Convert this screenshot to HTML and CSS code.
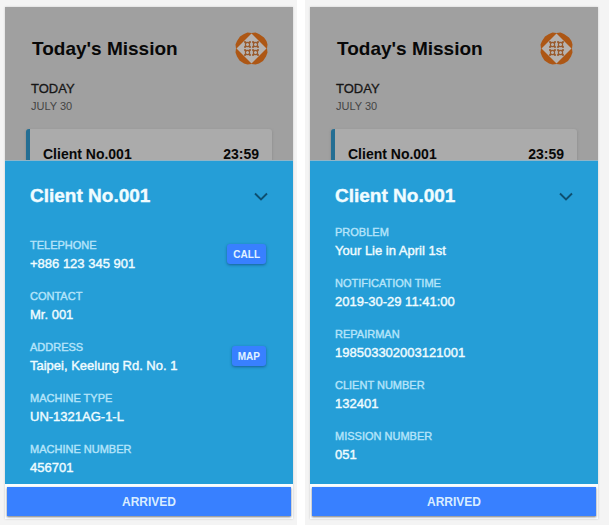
FILE: index.html
```html
<!DOCTYPE html>
<html lang="en">
<head>
<meta charset="utf-8">
<title>Today's Mission</title>
<link rel="stylesheet" href="styles.css">
</head>
<body>
<svg class="defs" aria-hidden="true">
  <defs>
    <g id="cell" fill="none" stroke="#9a5a2c">
      <path d="M.5.500 2.200 2.200M6.500.500 4.800 2.200M.5 6.500 2.200 4.800M6.500 6.500 4.800 4.800" stroke-width="1.300"/>
      <circle cx="3.500" cy="3.500" r="2.100" stroke-width="1.100"/>
      <path d="M.5.600H2.200M4.800.600H6.500M.5 6.400H2.200M4.800 6.400H6.500M.6.500V2.200M.6 4.800V6.500M6.400.500V2.200M6.400 4.800V6.500" stroke-width=".7"/>
    </g>
    <symbol id="logo" viewBox="0 0 33 33">
      <path d="M12.500.500 16.500 1 20.500.500 24 2 29 5.500 31.500 9 32.500 12.500 32 16.500 32.500 20.500 31 24.500 28 29 24 31.500 20.500 32.500 16.500 32 12.500 32.500 9 31.500 4.500 28.500 2 24.500.500 20.500 1 16.500.500 12.500 2 9 5 4.500 9 2Z" fill="#ad5715"/>
      <path d="M16.500 1.500 31.500 16.500 16.500 31.500 1.500 16.500Z" fill="#b6b2af"/>
      <use href="#cell" x="9" y="9"/>
      <use href="#cell" x="17" y="9"/>
      <use href="#cell" x="9" y="17"/>
      <use href="#cell" x="17" y="17"/>
    </symbol>
    <symbol id="chevron" viewBox="0 0 14 9">
      <path d="M1 1.500l6 6 6-6" fill="none" stroke="#0d4f70" stroke-width="1.900"/>
    </symbol>
  </defs>
</svg>
<main class="screens">
  <section class="frame">
    <div class="phone">
      <div class="backdrop">
        <header class="top"><h1>Today's Mission</h1><svg class="logo"><use href="#logo"/></svg></header>
        <div class="day"><h2>TODAY</h2><p>JULY 30</p></div>
        <article class="card"><span>Client No.001</span><time>23:59</time></article>
      </div>
      <div class="sheet">
        <div class="sheet-head"><h2>Client No.001</h2><button class="close" aria-label="Close"><svg><use href="#chevron"/></svg></button></div>
        <dl class="details contact">
          <div class="item"><div><dt>TELEPHONE</dt><dd>+886 123 345 901</dd></div><button class="action">CALL</button></div>
          <div class="item"><div><dt>CONTACT</dt><dd>Mr. 001</dd></div></div>
          <div class="item"><div><dt>ADDRESS</dt><dd>Taipei, Keelung Rd. No. 1</dd></div><button class="action">MAP</button></div>
          <div class="item"><div><dt>MACHINE TYPE</dt><dd>UN-1321AG-1-L</dd></div></div>
          <div class="item"><div><dt>MACHINE NUMBER</dt><dd>456701</dd></div></div>
        </dl>
      </div>
      <footer class="bottom"><button class="arrived">ARRIVED</button></footer>
    </div>
  </section>
  <section class="frame last">
    <div class="phone">
      <div class="backdrop">
        <header class="top"><h1>Today's Mission</h1><svg class="logo"><use href="#logo"/></svg></header>
        <div class="day"><h2>TODAY</h2><p>JULY 30</p></div>
        <article class="card"><span>Client No.001</span><time>23:59</time></article>
      </div>
      <div class="sheet">
        <div class="sheet-head"><h2>Client No.001</h2><button class="close" aria-label="Close"><svg><use href="#chevron"/></svg></button></div>
        <dl class="details">
          <div class="item"><div><dt>PROBLEM</dt><dd>Your Lie in April 1st</dd></div></div>
          <div class="item"><div><dt>NOTIFICATION TIME</dt><dd>2019-30-29 11:41:00</dd></div></div>
          <div class="item"><div><dt>REPAIRMAN</dt><dd>198503302003121001</dd></div></div>
          <div class="item"><div><dt>CLIENT NUMBER</dt><dd>132401</dd></div></div>
          <div class="item"><div><dt>MISSION NUMBER</dt><dd>051</dd></div></div>
        </dl>
      </div>
      <footer class="bottom"><button class="arrived">ARRIVED</button></footer>
    </div>
  </section>
</main>
</body>
</html>
```
FILE: styles.css
```css
* { box-sizing: border-box; }
body, h1, h2, p, dl, dd { margin: 0; }
body { background: #fff; font-family: "Liberation Sans", Arial, sans-serif; }
button { font: inherit; border: 0; padding: 0; cursor: pointer; }
.defs { position: absolute; width: 0; height: 0; }

.screens { display: grid; grid-template-columns: 297fr 304fr; gap: 8px; }
.frame { display: flex; background: #f4f4f4; padding: 7px 4px 6px 5px; }
.last { padding-right: 11px; }
.phone { flex: 1; display: flex; flex-direction: column; background: #fafdff; box-shadow: 0 0 2px #ccc; }

.backdrop { display: flow-root; height: 154px; overflow: hidden; background: #a0a0a0; border-bottom: 1px solid #8fb5c8; }
.top { display: flex; align-items: center; justify-content: space-between; padding: 25px 25px 0 27px; }
.top h1 { font-size: 19px; line-height: 33px; color: #080808; }
.logo { width: 33px; height: 33px; }
.day { padding: 15px 26px 0; }
.day h2 { font-size: 13px; line-height: 18px; font-weight: 400; color: #161616; -webkit-text-stroke: 0.3px #161616; }
.day p { font-size: 11px; line-height: 16px; color: #444; }
.card { display: flex; justify-content: space-between; margin: 15px 21px 0; padding: 16px 13px 16px; border-left: 4px solid #246e93; border-radius: 3px; background: #ababab; box-shadow: 0 1px 3px #888; font-size: 14px; line-height: 18px; font-weight: 700; color: #080808; }

.sheet { flex: 1; background: #259ed7; padding: 0 25px 5px; }
.sheet-head { display: flex; align-items: center; justify-content: space-between; padding-top: 20px; }
.sheet-head h2 { font-size: 19px; line-height: 30px; color: #f0fcff; -webkit-text-stroke: 0.4px #f0fcff; }
.close { display: flex; padding: 4px 0; background: none; }
.close svg { width: 14px; height: 9px; }
.details { display: grid; gap: 13px; padding-top: 13px; }
.contact { padding-top: 26px; }
.item { display: flex; align-items: center; justify-content: space-between; height: 38px; }
dt { font-size: 11px; line-height: 16px; color: #b5e4fa; -webkit-text-stroke: 0.4px #b5e4fa; }
dd { font-size: 13px; line-height: 22px; color: #f0fcff; -webkit-text-stroke: 0.4px #f0fcff; }
.action { height: 20px; margin-right: 2px; margin-bottom: 4px; padding: 0 6px; border-radius: 3px; background: #3880ff; box-shadow: 0 1px 3px #175f98; font-size: 10px; font-weight: 700; color: #e2f3ff; }

.bottom { padding: 3px 2px; }
.arrived { display: block; width: 100%; height: 29px; background: #3880ff; box-shadow: 0 1px 2px #777; font-size: 12px; font-weight: 700; color: #d9edff; }
```
